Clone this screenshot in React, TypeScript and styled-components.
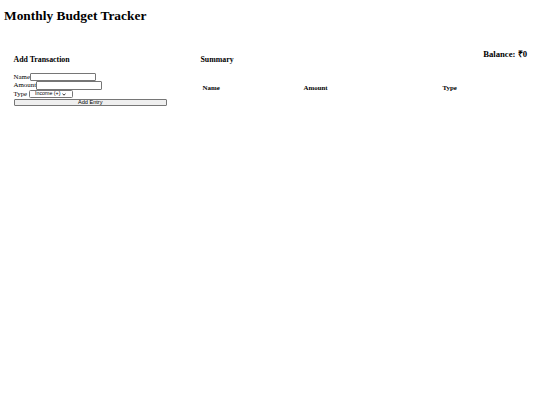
import React, { useState } from "react";
import styled, { createGlobalStyle } from "styled-components";

const GlobalStyle = createGlobalStyle`
  html, body {
    margin: 0;
    padding: 0;
    background: #ffffff;
  }
  body {
    font-family: "Liberation Serif", "Times New Roman", serif;
    color: #000000;
  }
`;

const Page = styled.div`
  padding: 9px 4px 0 4px;
`;

const Title = styled.h1`
  margin: 0;
  font-size: 13.4px;
  line-height: 14.5px;
  font-weight: 700;
`;

const Main = styled.div`
  display: flex;
  margin-top: 26px;
`;

const FormPanel = styled.section`
  width: 187px;
  padding: 6px 0 0 9.5px;
  flex-shrink: 0;
`;

const SummaryPanel = styled.section`
  flex: 1;
  padding-right: 9px;
`;

const SectionTitle = styled.h3`
  margin: 0;
  font-size: 7.85px;
  line-height: 8.6px;
  font-weight: 700;
`;

const SummaryHeader = styled.div`
  display: flex;
  justify-content: space-between;
  align-items: flex-start;

  ${SectionTitle} {
    margin-top: 6.3px;
  }
`;

const Balance = styled.h2`
  margin: 0;
  font-size: 8.7px;
  line-height: 9.6px;
  font-weight: 700;
`;

const Form = styled.form`
  display: flex;
  flex-direction: column;
  align-items: flex-start;
  margin-top: 8.8px;
`;

const Row = styled.label`
  display: flex;
  align-items: center;
  font-size: 6.9px;
  line-height: 8px;
`;

const Field = styled.input`
  box-sizing: border-box;
  width: 66px;
  height: 8.4px;
  margin: 0;
  padding: 0 1px;
  border: 1px solid #767676;
  border-radius: 1px;
  font-size: 5.6px;
  font-family: "Liberation Sans", Arial, sans-serif;
  background: #ffffff;
`;

const SelectWrap = styled.span`
  position: relative;
  display: inline-flex;
  margin-left: 2.3px;
  margin-top: 0.8px;
`;

const TypeSelect = styled.select`
  box-sizing: border-box;
  appearance: none;
  -webkit-appearance: none;
  width: 43.7px;
  height: 7.6px;
  margin: 0;
  padding: 0 0 0 4.5px;
  border: 1px solid #767676;
  border-radius: 1.5px;
  font-size: 5.3px;
  line-height: 5.6px;
  font-family: "Liberation Sans", Arial, sans-serif;
  background: #ffffff;
  color: #000000;
`;

const Chevron = styled.svg`
  position: absolute;
  right: 7px;
  top: 2.3px;
  width: 4px;
  height: 3px;
  pointer-events: none;
`;

const SubmitButton = styled.button`
  box-sizing: border-box;
  width: 153.4px;
  height: 7.6px;
  margin: 0.8px 0 0 0;
  padding: 0;
  border: 1px solid #767676;
  border-radius: 1px;
  background: #efefef;
  font-size: 5.6px;
  line-height: 5.6px;
  font-family: "Liberation Sans", Arial, sans-serif;
  color: #000000;
`;

const Table = styled.table`
  width: 100%;
  margin-top: 19px;
  border-collapse: collapse;
  table-layout: fixed;
`;

const HeadCell = styled.th<{ $width?: number }>`
  width: ${({ $width }) => ($width ? `${$width}px` : "auto")};
  padding: 1px 2px;
  text-align: left;
  font-size: 6.9px;
  line-height: 7.6px;
  font-weight: 700;
`;

export default function App() {
  const [name, setName] = useState("");
  const [amount, setAmount] = useState("");
  const [type, setType] = useState("income");
  const balance = 0;

  return (
    <>
      <GlobalStyle />
      <Page>
        <Title>Monthly Budget Tracker</Title>
        <Main>
          <FormPanel>
            <SectionTitle>Add Transaction</SectionTitle>
            <Form onSubmit={(e) => e.preventDefault()}>
              <Row>
                Name
                <Field value={name} onChange={(e) => setName(e.target.value)} />
              </Row>
              <Row>
                Amount
                <Field value={amount} onChange={(e) => setAmount(e.target.value)} />
              </Row>
              <Row>
                Type
                <SelectWrap>
                  <TypeSelect value={type} onChange={(e) => setType(e.target.value)}>
                    <option value="income">Income (+)</option>
                    <option value="expense">Expense (-)</option>
                  </TypeSelect>
                  <Chevron viewBox="0 0 8 6">
                    <path d="M1 1.2 L4 4.4 L7 1.2" fill="none" stroke="#000" strokeWidth="1.6" />
                  </Chevron>
                </SelectWrap>
              </Row>
              <SubmitButton type="submit">Add Entry</SubmitButton>
            </Form>
          </FormPanel>
          <SummaryPanel>
            <SummaryHeader>
              <SectionTitle>Summary</SectionTitle>
              <Balance>Balance: ₹{balance}</Balance>
            </SummaryHeader>
            <Table>
              <thead>
                <tr>
                  <HeadCell $width={97}>Name</HeadCell>
                  <HeadCell $width={135}>Amount</HeadCell>
                  <HeadCell>Type</HeadCell>
                </tr>
              </thead>
            </Table>
          </SummaryPanel>
        </Main>
      </Page>
    </>
  );
}
